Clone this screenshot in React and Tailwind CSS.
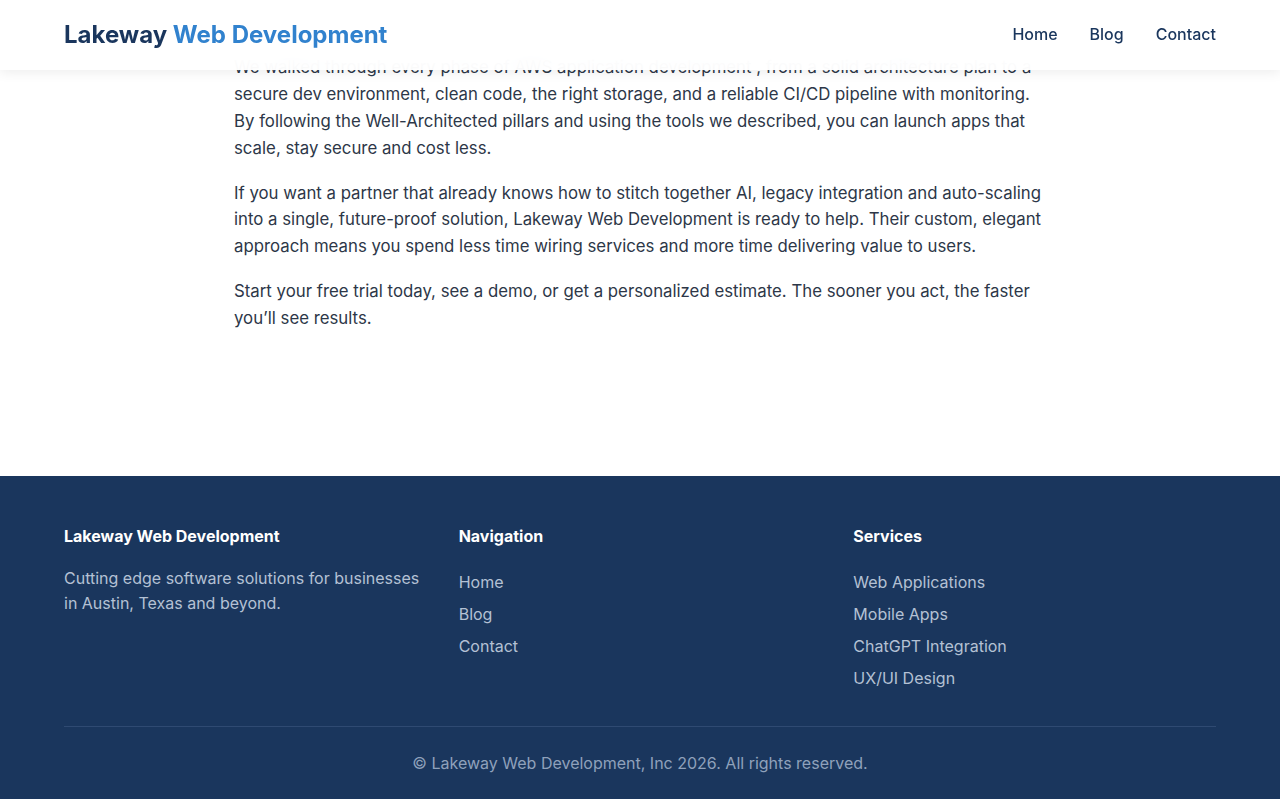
import React from "react";

const navLinks = ["Home", "Blog", "Contact"];
const services = ["Web Applications", "Mobile Apps", "ChatGPT Integration", "UX/UI Design"];

const Header = () => (
  <header className="fixed top-0 left-0 right-0 z-10 h-[70px] bg-white/95 backdrop-blur-md shadow-[0_2px_12px_rgba(0,0,0,0.08)]">
    <div className="max-w-6xl mx-auto h-full flex items-center justify-between">
      <a className="text-2xl font-bold">
        <span className="text-[#1a365d]">Lakeway</span>{" "}
        <span className="text-[#3182ce]">Web Development</span>
      </a>
      <nav className="flex items-center gap-8 -mt-0.5">
        {navLinks.map((l) => (
          <a key={l} className="text-base font-medium text-[#1a365d]">
            {l}
          </a>
        ))}
      </nav>
    </div>
  </header>
);

const Footer = () => (
  <footer className="bg-[#1a365d] pt-12 pb-6">
    <div className="max-w-6xl mx-auto">
      <div className="grid grid-cols-3 gap-8">
        {/* brand */}
        <div>
          <h3 className="text-base leading-6 font-bold text-white">Lakeway Web Development</h3>
          <p className="mt-[18px] text-base leading-[25px] text-[#b4c1d4]">
            Cutting edge software solutions for businesses in Austin, Texas and beyond.
          </p>
        </div>

        <div>
          <h3 className="text-base leading-6 font-bold text-white">Navigation</h3>
          <ul className="mt-[22px] flex flex-col gap-2">
            {navLinks.map((l) => (
              <li key={l} className="text-base leading-6 text-[#b4c1d4]">
                {l}
              </li>
            ))}
          </ul>
        </div>

        <div>
          <h3 className="text-base leading-6 font-bold text-white">Services</h3>
          <ul className="mt-[22px] flex flex-col gap-2">
            {services.map((s) => (
              <li key={s} className="text-base leading-6 text-[#b4c1d4]">
                {s}
              </li>
            ))}
          </ul>
        </div>
      </div>

      <div className="mt-9 border-t border-[#2f4a72] pt-6 text-center text-base leading-6 text-[#8fa1bb]">
        © Lakeway Web Development, Inc 2026. All rights reserved.
      </div>
    </div>
  </footer>
);

export default function App() {
  return (
    <div className="min-h-screen bg-white font-['Inter',sans-serif]">
      <Header />

      <main className="pt-[54px] pb-[144px]">
        <article className="w-[812px] mx-auto text-[16.8px] leading-[1.6] text-[#2d3748]">
          <p className="mb-[18px]">
            We walked through every phase of AWS application development , from a solid architecture plan to a
            secure dev environment, clean code, the right storage, and a reliable CI/CD pipeline with monitoring.
            By following the Well-Architected pillars and using the tools we described, you can launch apps that
            scale, stay secure and cost less.
          </p>
          <p className="mb-[18px]">
            If you want a partner that already knows how to stitch together AI, legacy integration and auto-scaling
            into a single, future-proof solution, Lakeway Web Development is ready to help. Their custom, elegant
            approach means you spend less time wiring services and more time delivering value to users.
          </p>
          <p>
            Start your free trial today, see a demo, or get a personalized estimate. The sooner you act, the faster
            you’ll see results.
          </p>
        </article>
      </main>

      <Footer />
    </div>
  );
}
